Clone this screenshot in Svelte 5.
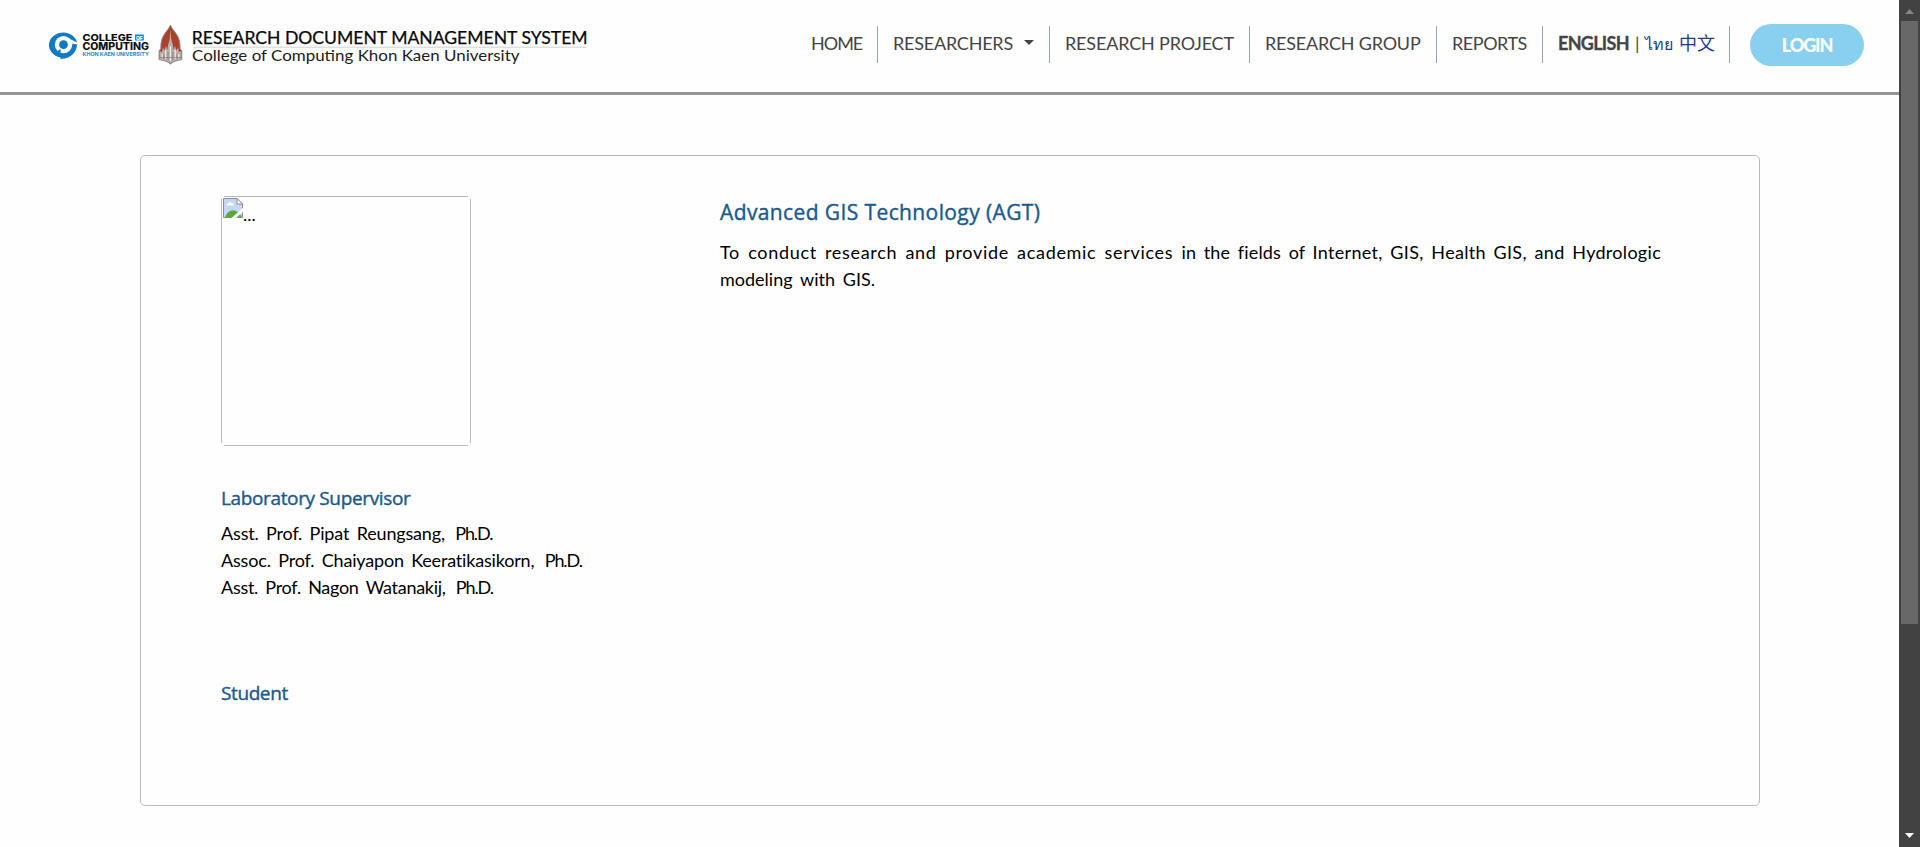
<script>
  const menu = [
    { label: 'HOME', width: 68, spacing: -1, first: true },
    { label: 'RESEARCHERS', width: 172, spacing: -0.22, caret: true },
    { label: 'RESEARCH PROJECT', width: 200, spacing: -0.17 },
    { label: 'RESEARCH GROUP', width: 187, spacing: -0.2 },
    { label: 'REPORTS', width: 106, spacing: -0.45 }
  ];
  const supervisors = [
    { name: 'Asst. Prof. Pipat Reungsang,', degree: 'Ph.D.', spacing: -0.17 },
    { name: 'Assoc. Prof. Chaiyapon Keeratikasikorn,', degree: 'Ph.D.', spacing: -0.18 },
    { name: 'Asst. Prof. Nagon Watanakij,', degree: 'Ph.D.', spacing: -0.29 }
  ];
</script>

<div class="page">
  <div class="content">
    <header>
      <svg class="brand" width="560" height="50" viewBox="40 20 560 50" role="img" aria-label="College of Computing, Khon Kaen University">
        <!-- college mark -->
        <path d="M77.3 44.3A14.2 12.4 0 1 0 60.5 57.2V59Q69 58.3 73 54Q76.5 50.5 77.3 44.3Z" fill="#1279c4" />
        <circle cx="63.5" cy="44.6" r="8.7" fill="#fff" />
        <path d="M53.5 53.5L60.6 49L60.6 57.4Q56 56.6 53.5 53.5Z" fill="#1279c4" />
        <path d="M70 39L77.6 42.8V44.6L71 43.5Z" fill="#fff" />
        <circle cx="63.5" cy="44.7" r="4.4" fill="#1279c4" />
        <g font-family="Inter, sans-serif" font-weight="800" fill="#111">
          <text x="82.4" y="41.1" font-size="9.3" textLength="50" lengthAdjust="spacingAndGlyphs">COLLEGE</text>
          <text x="82.4" y="50.2" font-size="9.8" textLength="66.6" lengthAdjust="spacingAndGlyphs">COMPUTING</text>
          <text x="82.6" y="56.2" font-size="5.2" font-weight="700" fill="#1e88cf" textLength="66.2" lengthAdjust="spacingAndGlyphs">KHON KAEN UNIVERSITY</text>
          <rect x="135" y="34.5" width="8.8" height="6" fill="#1686d0" />
          <text x="136" y="39.5" font-size="5.4" fill="#fff" textLength="6.8" lengthAdjust="spacingAndGlyphs">OF</text>
        </g>
        <!-- university emblem -->
        <path d="M170.4 25.2C172.5 30 176.5 33 178.3 37.5C179.8 41 180.2 46 180 49L181.8 50.5V59.5C178 60.5 173 61 170.4 64C168 61 163 60.5 159.1 59.5V50.5L160.9 49C160.7 46 161 41 162.6 37.5C164.4 33 168.4 30 170.4 25.2Z" fill="#ad402a" stroke="#8d8582" stroke-width="1" />
        <path d="M170.4 30L171.4 40L173 45L173.4 50L175 46L176.4 50.5L178 47.5L179 52L181.3 51V59.2C178 60.4 173 60.6 170.4 63.2C168 60.6 163 60.4 159.6 59.2V51L162 52L163 47.5L164.6 50.5L166 46L167.5 50L168 45L169.5 40Z" fill="#b5aeab" />
        <path d="M170.4 46V61M165.7 50V59M175.2 50V59M162.2 54V58M178.7 54V58" stroke="#f3efed" stroke-width="1.1" />
        <path d="M168 52V60M172.8 52V60M163.9 54V59M177 54V59M159.8 57.5H181.2" stroke="#776e6b" stroke-width=".6" />
        <!-- system name -->
        <g font-family="Lato, sans-serif">
          <text x="191.8" y="44.3" font-size="16.4" fill="#080808" stroke="#080808" stroke-width=".25" textLength="395.8" lengthAdjust="spacingAndGlyphs">RESEARCH DOCUMENT MANAGEMENT SYSTEM</text>
          <rect x="193" y="46.7" width="394" height="1" fill="#d2d2d2" />
          <text x="192" y="61" font-size="16.2" fill="#1c1c1c" textLength="327.5" lengthAdjust="spacingAndGlyphs">College of Computing Khon Kaen University</text>
        </g>
      </svg>

      <nav>
        {#each menu as item}
          <a class="item" class:first={item.first} style:width="{item.width}px" style:letter-spacing="{item.spacing}px">{item.label}{#if item.caret}<i class="caret"></i>{/if}</a>
        {/each}
        <div class="item lang">
          <b>ENGLISH</b><span class="bar">|</span><span class="thai">ไทย</span><span class="zh">中文</span>
        </div>
        <button>LOGIN</button>
      </nav>
    </header>

    <main>
      <aside>
        <div class="photo">
          <svg width="20" height="20" viewBox="0 0 20 20">
            <path d="M.5 .5H14L19.5 6V19.5H.5Z" fill="#c5d7f7" stroke="#8e8e8e" />
            <path d="M14 .5V6H19.5Z" fill="#fff" stroke="#8e8e8e" />
            <path d="M3.5 7.5Q3.5 5.3 5.5 5.2Q7 2.8 8.9 5Q11 5.2 10.7 7.5Z" fill="#fff" />
            <path d="M2 19Q5 12.5 10 12.3Q15 12.5 19 19Z" fill="#58ab36" />
            <path d="M1 19.5H19" stroke="#8e8e8e" />
            <path d="M8.5 20L20 9.8V13.8L13 20Z" fill="#fff" />
          </svg><span>...</span>
        </div>
        <h2 class="supervisor">Laboratory Supervisor</h2>
        <ul>
          {#each supervisors as person}
            <li style:letter-spacing="{person.spacing}px">{person.name} <span class="degree">{person.degree}</span></li>
          {/each}
        </ul>
        <h2 class="student">Student</h2>
      </aside>
      <article>
        <h1>Advanced GIS Technology (AGT)</h1>
        <p>
          <span class="line"><span class="wide">To conduct research and provide academic services{' '}</span><span class="tight">in the fields of{' '}</span><span class="regular">Internet, GIS, Health GIS, and Hydrologic</span></span>
          <span class="line last">modeling with GIS.</span>
        </p>
      </article>
    </main>
  </div>

  <div class="scrollbar">
    <svg width="9" height="5" viewBox="0 0 9 5"><path d="M0 5L4.5 0L9 5Z" fill="#868686" /></svg>
    <div class="thumb"></div>
    <svg class="down" width="9" height="5" viewBox="0 0 9 5"><path d="M0 0H9L4.5 5Z" fill="#fff" /></svg>
  </div>
</div>

<style>
  :global(body) { background: #fff; overflow: hidden; }
  * { box-sizing: border-box; }
  .page {
    display: flex;
    width: 1920px;
    height: 847px;
    background: #fefefe;
    font-family: Lato, 'Noto Sans CJK SC', sans-serif;
    font-size: 18px;
    color: #000;
  }
  .content { width: 1899px; }
  header {
    display: flex;
    height: 95px;
    padding: 20px 35px 0 40px;
    border-bottom: 3px solid #959595;
  }
  .brand { display: block; flex: none; }
  nav { display: flex; flex: 1; padding: 6px 0 0 210px; }
  .item {
    flex: none;
    height: 37px;
    padding-left: 15px;
    border-right: 1px solid #94a8b8;
    line-height: 35px;
    white-space: nowrap;
    color: #444;
  }
  .item.first { padding-left: 1px; }
  .caret {
    display: inline-block;
    margin-left: 11px;
    vertical-align: 5px;
    border: 5px solid transparent;
    border-top-color: #444;
    border-bottom: 0;
  }
  .lang { display: flex; width: 187px; }
  .lang b { width: 77px; letter-spacing: -0.7px; -webkit-text-stroke: 0.3px #444; }
  .bar { width: 10px; }
  .thai { width: 34px; color: #1f3c88; font-size: 16px; }
  .zh { color: #1f3c88; }
  button {
    width: 114px;
    height: 42px;
    margin: -2px 0 0 20px;
    padding: 0;
    border: 0;
    border-radius: 21px;
    background: #89cff0;
    color: #fff;
    font: 900 18px Lato, sans-serif;
    letter-spacing: -1.1px;
  }
  main {
    display: flex;
    width: 1620px;
    height: 651px;
    margin: 60px 0 0 140px;
    padding: 40px 80px 0;
    border: 1px solid #bababa;
    border-radius: 5px;
  }
  aside { width: 499px; }
  .photo {
    display: flex;
    width: 250px;
    height: 250px;
    padding: 2px;
    background:
      linear-gradient(#bababa, #bababa) center top / 244px 1px no-repeat,
      linear-gradient(#bababa, #bababa) center bottom / 244px 1px no-repeat,
      linear-gradient(#bababa, #bababa) left center / 1px 244px no-repeat,
      linear-gradient(#bababa, #bababa) right center / 1px 244px no-repeat;
  }
  .photo span { padding: 5px 0 0; }
  h1, h2 {
    margin: 0;
    color: #1b5a8e;
    font-family: 'Open Sans', sans-serif;
    font-weight: 500;
    -webkit-text-stroke: 0.4px #1b5a8e;
    white-space: nowrap;
  }
  h2 { font-size: 19px; line-height: 26px; }
  .supervisor { margin-top: 39px; letter-spacing: -0.36px; }
  .student { margin-top: 79px; letter-spacing: -0.4px; }
  ul { margin: 9px 0 0; padding: 0; list-style: none; }
  li { line-height: 27px; word-spacing: 3px; white-space: nowrap; }
  .degree { margin-left: 3px; letter-spacing: -1.1px; }
  article { padding-top: 2px; }
  h1 { font-size: 21px; line-height: 28px; letter-spacing: 0.39px; }
  p { margin: 13px 0 0; line-height: 27px; }
  .line { display: block; white-space: pre; }
  .wide { letter-spacing: 0.69px; word-spacing: 2.85px; }
  .tight { letter-spacing: 0.16px; word-spacing: 2.85px; }
  .regular { letter-spacing: 0.3px; word-spacing: 2.85px; }
  .last { word-spacing: 3.2px; }
  .scrollbar {
    display: flex;
    flex-direction: column;
    width: 21px;
    height: 847px;
    padding: 9px 0 9px 2px;
    background: #424242;
  }
  .scrollbar svg { display: block; flex: none; margin-left: 4px; }
  .thumb { width: 17px; height: 603px; margin-top: 7px; background: #686868; }
  .down { margin-top: auto; }
</style>
